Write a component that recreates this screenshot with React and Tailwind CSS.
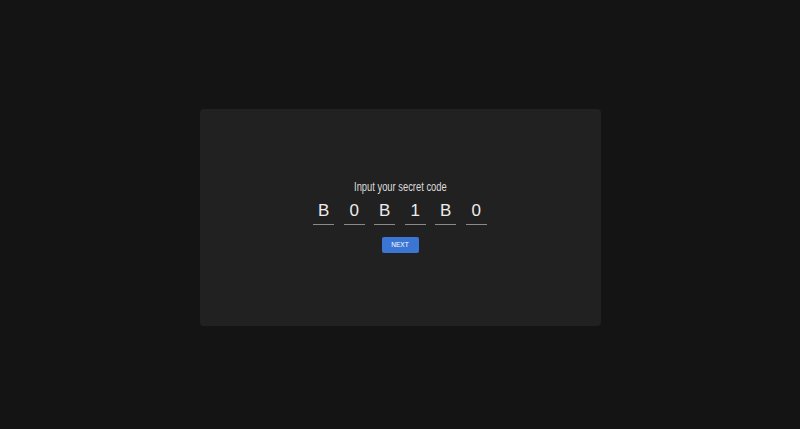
import React from "react";

export default function App() {
  const chars = ["B", "0", "B", "1", "B", "0"];
  return (
    <div className="w-screen h-screen bg-[#141414] flex items-center justify-center pt-[6px]" style={{ fontFamily: '"Liberation Sans", Arial, sans-serif' }}>
      <div className="w-[401px] h-[217px] rounded-[4px] bg-[#212121] flex flex-col items-center justify-center pb-[2px]">
        <div className="text-[12px] leading-[14px] text-[#dcdcdc] scale-x-[0.78] whitespace-nowrap">Input your secret code</div>
        <div className="flex gap-[9.5px] mt-[6px]">
          {chars.map((c, i) => (
            <div key={i} className="w-[21px] flex flex-col items-center">
              <div className="text-[17px] leading-[22px] text-[#ececec]">{c}</div>
              <div className="w-full h-[1.5px] bg-[#8a8a8a] mt-[2px]" />
            </div>
          ))}
        </div>
        <button className="mt-[12px] w-[37px] h-[16px] rounded-[2px] bg-[#3b76d4] text-white text-[6.5px] flex items-center justify-center">NEXT</button>
      </div>
    </div>
  );
}
